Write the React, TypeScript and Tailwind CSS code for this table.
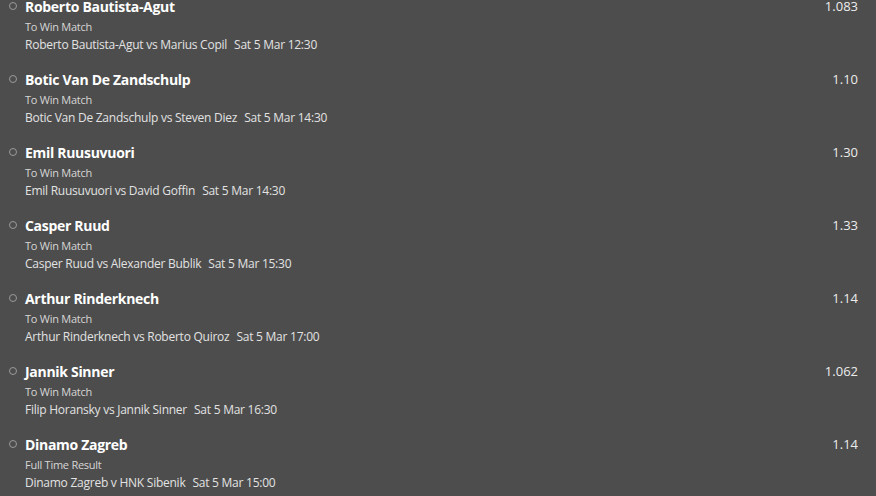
const bets = [
  { name: "Roberto Bautista-Agut", market: "To Win Match", event: "Roberto Bautista-Agut vs Marius Copil", time: "Sat 5 Mar 12:30", odds: "1.083" },
  { name: "Botic Van De Zandschulp", market: "To Win Match", event: "Botic Van De Zandschulp vs Steven Diez", time: "Sat 5 Mar 14:30", odds: "1.10" },
  { name: "Emil Ruusuvuori", market: "To Win Match", event: "Emil Ruusuvuori vs David Goffin", time: "Sat 5 Mar 14:30", odds: "1.30" },
  { name: "Casper Ruud", market: "To Win Match", event: "Casper Ruud vs Alexander Bublik", time: "Sat 5 Mar 15:30", odds: "1.33" },
  { name: "Arthur Rinderknech", market: "To Win Match", event: "Arthur Rinderknech vs Roberto Quiroz", time: "Sat 5 Mar 17:00", odds: "1.14" },
  { name: "Jannik Sinner", market: "To Win Match", event: "Filip Horansky vs Jannik Sinner", time: "Sat 5 Mar 16:30", odds: "1.062" },
  { name: "Dinamo Zagreb", market: "Full Time Result", event: "Dinamo Zagreb v HNK Sibenik", time: "Sat 5 Mar 15:00", odds: "1.14" },
];

export default function App() {
  return (
    <div className="w-[876px] h-[496px] overflow-hidden bg-[#4d4d4d] font-['Open_Sans',sans-serif]">
      <div className="-mt-[2px]">
        {bets.map((b) => (
          <div key={b.name} className="h-[73px] flex pl-[9px] pr-[18px]">
            <div className="w-[8px] h-[8px] mt-[4px] rounded-full border border-[#9a9a9a]" />
            <div className="ml-[8px] flex-1">
              <div className="h-[18px] leading-[18px] text-[14px] font-bold text-white tracking-[-0.3px]">{b.name}</div>
              <div className="mt-[3px] h-[16px] leading-[16px] text-[11px] text-[#d6d6d6] tracking-[-0.25px]">{b.market}</div>
              <div className="mt-[1px] h-[17px] leading-[17px] text-[12px] text-[#e2e2e2] tracking-[-0.25px]">
                {b.event}
                <span className="ml-[7px]">{b.time}</span>
              </div>
            </div>
            <div className="-mt-[1px] h-[18px] leading-[18px] text-[13px] text-[#ececec]">{b.odds}</div>
          </div>
        ))}
      </div>
    </div>
  );
}
